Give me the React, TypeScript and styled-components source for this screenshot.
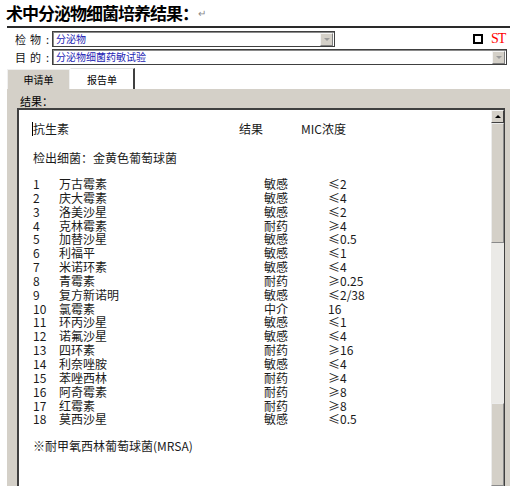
import React from "react";
import styled, { createGlobalStyle } from "styled-components";

const Global = createGlobalStyle`
  html, body { margin: 0; padding: 0; background: #fff; }
  body { font-family: "Noto Sans CJK SC", "Liberation Sans", sans-serif; }
`;

const Page = styled.div`
  width: 514px;
  height: 486px;
  overflow: hidden;
  background: #fff;
  color: #000;
`;

const TitleBar = styled.div`
  height: 26px;
  padding-left: 6px;
  display: flex;
  align-items: center;
`;

const Title = styled.h1`
  margin: 0;
  font-size: 17px;
  font-weight: 700;
  letter-spacing: -1px;
  line-height: 24px;
  color: #000;
`;

const ReturnMark = styled.span`
  font-size: 10px;
  color: #8a8a8a;
  margin-left: 0;
  line-height: 24px;
`;

const Rule = styled.div`
  margin: 0 4px 0 7px;
  height: 2px;
  background: #2a2a2a;
`;

const Form = styled.div`
  padding: 3px 0 0 15px;
  display: flex;
  flex-direction: column;
  gap: 2px;
`;

const FieldRow = styled.div`
  display: flex;
  align-items: center;
  height: 16px;
`;

const FieldLabel = styled.div`
  width: 37px;
  display: flex;
  align-items: center;
  font-size: 11px;
  line-height: 16px;
  color: #111;
`;

const LabelChar = styled.span`
  width: 15px;
`;

const LabelColon = styled.span`
  margin-left: 1px;
`;

const Combo = styled.div<{ $w: number }>`
  width: ${(p) => p.$w}px;
  height: 16px;
  box-sizing: border-box;
  border: 1px solid #404040;
  box-shadow: inset 1px 1px 0 #8a8a8a;
  background: #fff;
  display: flex;
  align-items: center;
`;

const ComboText = styled.span`
  flex: 1;
  padding-left: 3px;
  font-size: 10px;
  line-height: 14px;
  color: #2424b4;
`;

const ComboButton = styled.span`
  width: 13px;
  height: 13px;
  margin-right: 1px;
  box-sizing: border-box;
  background: #d4d0c8;
  border: 1px solid;
  border-color: #f4f4f4 #808080 #808080 #f4f4f4;
  display: flex;
  align-items: center;
  justify-content: center;
`;

const DownTriangle = styled.span`
  width: 0;
  height: 0;
  border-left: 3px solid transparent;
  border-right: 3px solid transparent;
  border-top: 3px solid #9a9a9a;
`;

const CheckBox = styled.span`
  margin-left: 138px;
  width: 10px;
  height: 10px;
  box-sizing: border-box;
  border: 2px solid #000;
  background: #fff;
`;

const StMark = styled.span`
  margin-left: 8px;
  font-family: "Liberation Serif", serif;
  font-size: 14px;
  letter-spacing: -1px;
  color: #ff0000;
  line-height: 16px;
`;

const TabStrip = styled.div`
  display: flex;
  align-items: flex-end;
  height: 21px;
  margin-top: 3px;
  padding-left: 7px;
`;

const Tab = styled.div<{ $active?: boolean }>`
  box-sizing: border-box;
  width: ${(p) => (p.$active ? 65 : 63)}px;
  height: ${(p) => (p.$active ? 21 : 20)}px;
  display: flex;
  align-items: center;
  justify-content: center;
  font-size: 10px;
  color: #000;
  background: ${(p) => (p.$active ? "#fff" : "#d4d0c8")};
  border-top: 1px solid ${(p) => (p.$active ? "#e4e4e4" : "#f0f0f0")};
  border-left: 1px solid ${(p) => (p.$active ? "#fff" : "#f0f0f0")};
  border-right: ${(p) => (p.$active ? "2px solid #404040" : "1px solid #f0f0f0")};
`;

const Panel = styled.div`
  margin-left: 7px;
  width: 503px;
  height: 397px;
  background: #d4d0c8;
  display: flex;
  flex-direction: column;
`;

const PanelLabel = styled.div`
  height: 19px;
  box-sizing: border-box;
  padding: 5px 0 0 13px;
  font-size: 11px;
  line-height: 14px;
  color: #000;
`;

const TextBox = styled.div`
  margin-left: 10px;
  width: 488px;
  flex: 1;
  box-sizing: border-box;
  background: #fff;
  border-top: 2px solid #404040;
  border-left: 2px solid #404040;
  border-right: 1px solid #404040;
  display: flex;
`;

const Content = styled.div`
  flex: 1;
  padding: 12px 0 0 14px;
  font-size: 12px;
  color: #1a1a1a;
`;

const HeaderLine = styled.div`
  display: grid;
  grid-template-columns: 206px 62px auto;
  height: 14px;
  line-height: 14px;
`;

const Caret = styled.span`
  display: inline-block;
  width: 1px;
  height: 14px;
  margin-left: -1px;
  background: #000;
  vertical-align: top;
`;

const Line = styled.div<{ $top: number }>`
  margin-top: ${(p) => p.$top}px;
  height: 14px;
  line-height: 14px;
`;

const Rows = styled.div`
  margin-top: 12px;
`;

const Row = styled.div`
  display: grid;
  grid-template-columns: 26px 205px 64px auto;
  height: 13.85px;
  line-height: 13.85px;
  white-space: nowrap;
`;

const ScrollBar = styled.div`
  width: 13px;
  display: flex;
  flex-direction: column;
  background: #ebeae7;
`;

const ScrollButton = styled.div`
  height: 13px;
  box-sizing: border-box;
  background: #d4d0c8;
  border: 1px solid;
  border-color: #f4f4f4 #404040 #404040 #f4f4f4;
  display: flex;
  align-items: center;
  justify-content: center;
`;

const UpTriangle = styled.span`
  width: 0;
  height: 0;
  border-left: 3px solid transparent;
  border-right: 3px solid transparent;
  border-bottom: 3px solid #000;
`;

const Thumb = styled.div<{ $h?: number }>`
  box-sizing: border-box;
  ${(p) => (p.$h ? `height: ${p.$h}px;` : "flex: 1;")}
  background: #d4d0c8;
  border: 1px solid;
  border-color: #ececec #8a8a8a #8a8a8a #ececec;
`;

const Track = styled.div<{ $h: number }>`
  height: ${(p) => p.$h}px;
  background: #ebeae7;
`;

const rows: [string, string, string, string][] = [
  ["1", "万古霉素", "敏感", "≤2"],
  ["2", "庆大霉素", "敏感", "≤4"],
  ["3", "洛美沙星", "敏感", "≤2"],
  ["4", "克林霉素", "耐药", "≥4"],
  ["5", "加替沙星", "敏感", "≤0.5"],
  ["6", "利福平", "敏感", "≤1"],
  ["7", "米诺环素", "敏感", "≤4"],
  ["8", "青霉素", "耐药", "≥0.25"],
  ["9", "复方新诺明", "敏感", "≤2/38"],
  ["10", "氯霉素", "中介", "16"],
  ["11", "环丙沙星", "敏感", "≤1"],
  ["12", "诺氟沙星", "敏感", "≤4"],
  ["13", "四环素", "耐药", "≥16"],
  ["14", "利奈唑胺", "敏感", "≤4"],
  ["15", "苯唑西林", "耐药", "≥4"],
  ["16", "阿奇霉素", "耐药", "≥8"],
  ["17", "红霉素", "耐药", "≥8"],
  ["18", "莫西沙星", "敏感", "≤0.5"],
];

export default function App() {
  return (
    <Page>
      <Global />
      <TitleBar>
        <Title>术中分泌物细菌培养结果：</Title>
        <ReturnMark>↵</ReturnMark>
      </TitleBar>
      <Rule />
      <Form>
        <FieldRow>
          <FieldLabel>
            <LabelChar>检</LabelChar>
            <LabelChar>物</LabelChar>
            <LabelColon>:</LabelColon>
          </FieldLabel>
          <Combo $w={283}>
            <ComboText>分泌物</ComboText>
            <ComboButton>
              <DownTriangle />
            </ComboButton>
          </Combo>
          <CheckBox />
          <StMark>ST</StMark>
        </FieldRow>
        <FieldRow>
          <FieldLabel>
            <LabelChar>目</LabelChar>
            <LabelChar>的</LabelChar>
            <LabelColon>:</LabelColon>
          </FieldLabel>
          <Combo $w={455}>
            <ComboText>分泌物细菌药敏试验</ComboText>
            <ComboButton>
              <DownTriangle />
            </ComboButton>
          </Combo>
        </FieldRow>
      </Form>
      <TabStrip>
        <Tab>申请单</Tab>
        <Tab $active>报告单</Tab>
      </TabStrip>
      <Panel>
        <PanelLabel>结果：</PanelLabel>
        <TextBox>
          <Content>
            <HeaderLine>
              <span>
                <Caret />
                抗生素
              </span>
              <span>结果</span>
              <span>MIC浓度</span>
            </HeaderLine>
            <Line $top={15}>检出细菌：金黄色葡萄球菌</Line>
            <Rows>
              {rows.map(([n, name, res, mic]) => (
                <Row key={n}>
                  <span>{n}</span>
                  <span>{name}</span>
                  <span>{res}</span>
                  <span>{mic}</span>
                </Row>
              ))}
            </Rows>
            <Line $top={13}>※耐甲氧西林葡萄球菌(MRSA)</Line>
          </Content>
          <ScrollBar>
            <ScrollButton>
              <UpTriangle />
            </ScrollButton>
            <Thumb $h={120} />
            <Track $h={160} />
            <Thumb />
          </ScrollBar>
        </TextBox>
      </Panel>
    </Page>
  );
}
